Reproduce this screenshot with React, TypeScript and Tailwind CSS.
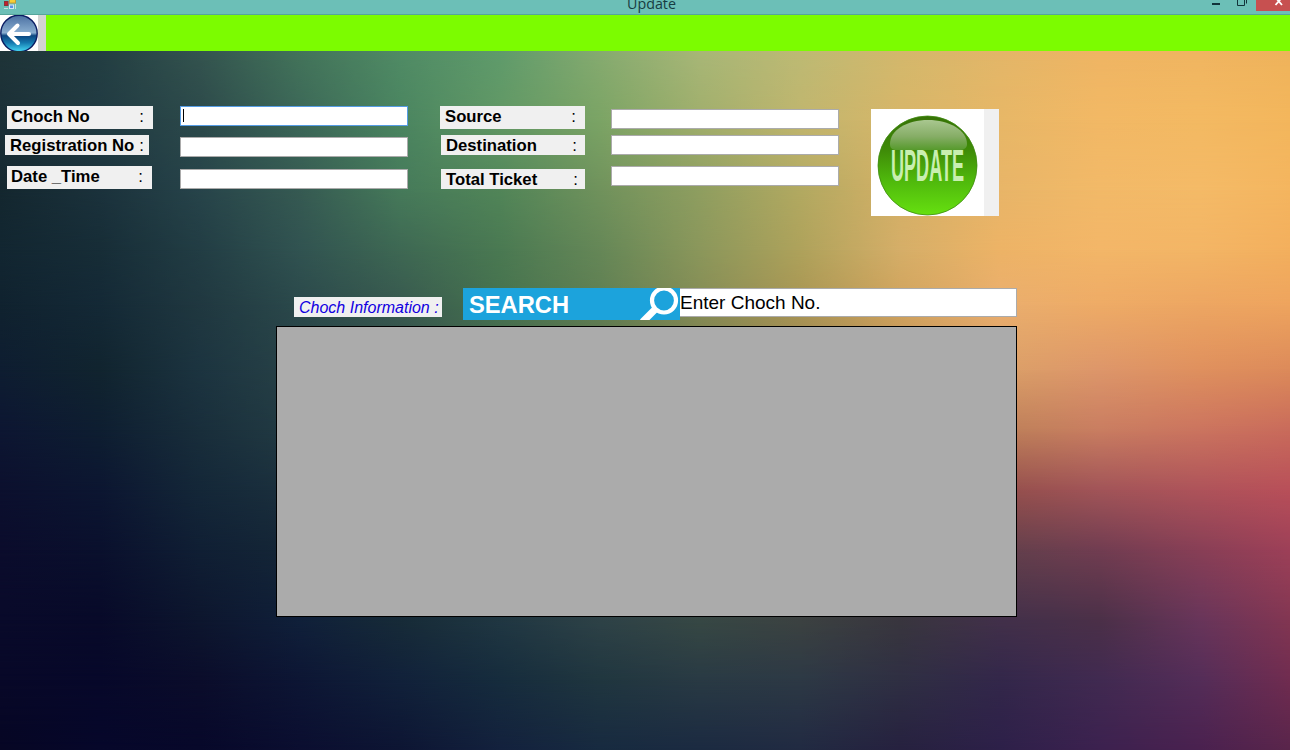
import React from "react";

const STOPS_X = [0, 100, 200, 300, 400, 500, 600, 700, 800, 900, 1000, 1100, 1200, 1290];

const ROWS: { y: number; colors: string[] }[] = [
  { y: 50, colors: ["#1f3438", "#233e42", "#34544f", "#43745a", "#508b65", "#5f9b6b", "#86ab70", "#a8b777", "#bdba74", "#d3b86c", "#e3b668", "#efb563", "#f0b560", "#efb35b"] },
  { y: 120, colors: ["#1b3038", "#213b43", "#2c494a", "#3c6758", "#4a8560", "#629865", "#7ba465", "#a0ae6c", "#c0b56e", "#d7b669", "#e7b767", "#f2b865", "#f3b962", "#f3b65c"] },
  { y: 190, colors: ["#14272f", "#1b323c", "#27444a", "#365a52", "#467a5a", "#518558", "#70925c", "#8f9e60", "#b2a961", "#d4b066", "#e8b568", "#f2b968", "#f4ba67", "#f4b55f"] },
  { y: 250, colors: ["#122631", "#172d37", "#223d44", "#315351", "#3e6853", "#4a7952", "#658757", "#8b975b", "#aea25b", "#d5ae68", "#edb366", "#f3b668", "#f3b565", "#f3af5d"] },
  { y: 305, colors: ["#10222f", "#142936", "#203840", "#2b494b", "#38594f", "#46724e", "#607f53", "#858c55", "#a99553", "#d0a35c", "#eaae6e", "#eeab66", "#eda662", "#eea45e"] },
  { y: 370, colors: ["#0e1d31", "#11242f", "#1c3440", "#284247", "#35504b", "#456451", "#5d704d", "#7c7c50", "#9c8555", "#c1925d", "#dba068", "#dd966a", "#df905e", "#dc8a5a"] },
  { y: 430, colors: ["#0d1632", "#0e1e31", "#192e3b", "#233c44", "#2d4649", "#3c574e", "#4f624d", "#6b6c50", "#867255", "#a4775a", "#bd8059", "#c97d61", "#cb745f", "#c96b5b"] },
  { y: 490, colors: ["#0c102e", "#0c1631", "#142738", "#1c313e", "#273e45", "#344c4b", "#43534a", "#5a5b4b", "#6f5c4c", "#83564e", "#944f4c", "#a15458", "#ae535a", "#b84f59"] },
  { y: 550, colors: ["#0b0c2c", "#0a102d", "#101f34", "#152737", "#1e333c", "#2a4045", "#374946", "#454a43", "#54494a", "#574147", "#62404b", "#713d51", "#883f56", "#9d4058"] },
  { y: 620, colors: ["#090a2a", "#080a29", "#0d162e", "#10203a", "#172b38", "#203742", "#2e4247", "#374844", "#3c4241", "#39363e", "#42304a", "#4b3048", "#68355a", "#823652"] },
  { y: 680, colors: ["#080828", "#07082a", "#0b0d2b", "#0d1634", "#11213a", "#162c3d", "#20363f", "#293a44", "#2d3945", "#2f2f43", "#33274a", "#412a51", "#542d58", "#702c50"] },
  { y: 750, colors: ["#060624", "#06072a", "#07082a", "#0b0e30", "#0d1533", "#13213d", "#172a40", "#1b2a41", "#212a42", "#26213f", "#2d2049", "#3c214f", "#4a214f", "#59254b"] },
];

function Backdrop() {
  return (
    <svg className="absolute inset-0 h-full w-full" viewBox="0 0 1290 750" preserveAspectRatio="none" aria-hidden="true">
      <defs>
        {ROWS.map((r, i) => (
          <React.Fragment key={r.y}>
            <linearGradient id={`row${i}`} gradientUnits="userSpaceOnUse" x1="0" x2="1290" y1="0" y2="0">
              {r.colors.map((c, j) => (
                <stop key={j} offset={STOPS_X[j] / 1290} stopColor={c} />
              ))}
            </linearGradient>
            {i > 0 && (
              <>
                <linearGradient id={`fade${i}`} gradientUnits="userSpaceOnUse" x1="0" x2="0" y1={ROWS[i - 1].y} y2={r.y}>
                  <stop offset="0" stopColor="#fff" stopOpacity="0" />
                  <stop offset="1" stopColor="#fff" stopOpacity="1" />
                </linearGradient>
                <mask id={`mask${i}`} maskUnits="userSpaceOnUse" x="0" y="0" width="1290" height="750">
                  <rect width="1290" height="750" fill={`url(#fade${i})`} />
                </mask>
              </>
            )}
          </React.Fragment>
        ))}
      </defs>
      {ROWS.map((r, i) => (
        <rect key={r.y} width="1290" height="750" fill={`url(#row${i})`} mask={i > 0 ? `url(#mask${i})` : undefined} />
      ))}
    </svg>
  );
}

function TitleBar() {
  return (
    <header className="relative flex h-[15px] items-start overflow-hidden border-b border-[#55a59b] bg-[#6cbfb7]">
      <svg className="ml-[3px] h-[11px] w-[15px]" viewBox="0 0 15 11">
        <rect x="1.5" y="1.5" width="3.500" height="4" fill="#c3202c" stroke="#8d3038" />
        <rect x="6.500" y="-2" width="6" height="5" fill="#f7cf35" stroke="#c49a35" />
        <rect x="6.500" y="5" width="4" height="3.500" fill="#5a91e6" stroke="#d5e4f5" />
        <path d="M5 8.500H1M12.500 4v5" stroke="#c8dedd" fill="none" />
      </svg>
      <span className="mt-[-6px] ml-[609px] text-[14.3px] leading-5 text-[#173c42]">Update</span>
      <svg className="ml-auto h-[11px] w-[80px]" viewBox="0 0 80 11">
        <rect x="2" y="3" width="8" height="2" fill="#12343a" />
        <path d="M27.500 -2v7.500h7V-2M36.500 -1v4.500" fill="none" stroke="#12343a" />
        <rect x="46" width="34" height="11" fill="#c75050" />
        <path d="M65.500 -2.500l6.500 7.500M72 -2.500L65.500 5" stroke="#fff" strokeWidth="1.8" />
      </svg>
    </header>
  );
}

function BackIcon() {
  return (
    <svg className="h-9 w-[38px] bg-white" viewBox="0 0 38 36">
      <defs>
        <linearGradient id="orbTop" x1="0" x2="0" y1="0" y2="1">
          <stop offset="0" stopColor="#4a70a2" />
          <stop offset="0.48" stopColor="#8aaed0" />
          <stop offset="0.56" stopColor="#0d4680" />
          <stop offset="0.75" stopColor="#1478ae" />
          <stop offset="1" stopColor="#48dcf6" />
        </linearGradient>
      </defs>
      <ellipse cx="19" cy="18.500" rx="18.200" ry="18.300" fill="url(#orbTop)" stroke="#0a1c62" strokeWidth="1.400" />
      <path d="M17.500 10.500L9 19l9 9M9.500 19H29" fill="none" stroke="#fff" strokeWidth="4" strokeLinecap="round" strokeLinejoin="round" />
    </svg>
  );
}

function Label({ text, box, colon }: { text: string; box: string; colon: string }) {
  return (
    <div className={`flex items-start justify-between bg-[#f0f0f0] text-[16.7px] leading-[22px] font-bold text-black ${box}`}>
      <span className="whitespace-pre">{text}</span>
      <span className={`font-normal ${colon}`}>:</span>
    </div>
  );
}

function Field({ box, focused = false }: { box: string; focused?: boolean }) {
  return (
    <div className={`h-5 w-[228px] border bg-white ${focused ? "border-[#569de5]" : "border-[#ababab]"} ${box}`}>
      {focused && <div className="mt-[2px] ml-[2px] h-[13px] w-px bg-black" />}
    </div>
  );
}

function UpdateButton() {
  return (
    <button className="mt-[3px] ml-8 flex h-[107px] w-32 bg-[#f0f0f0]">
      <svg className="h-[107px] w-[113px] bg-white" viewBox="0 0 113 107">
        <defs>
          <linearGradient id="ball" x1="0" x2="0" y1="0" y2="1">
            <stop offset="0" stopColor="#377206" />
            <stop offset="0.35" stopColor="#3f8c08" />
            <stop offset="0.65" stopColor="#4fb80c" />
            <stop offset="1" stopColor="#66e010" />
          </linearGradient>
          <linearGradient id="gloss" x1="0" x2="0" y1="0" y2="1">
            <stop offset="0" stopColor="#a9c790" />
            <stop offset="0.55" stopColor="#86ad66" />
            <stop offset="1" stopColor="#569a2c" />
          </linearGradient>
        </defs>
        <ellipse cx="56.500" cy="56.500" rx="49.500" ry="49.500" fill="url(#ball)" stroke="#3f8a10" strokeWidth="0.800" />
        <path d="M19 35C19 21 36 11 57 11s39 10 39 24c0 4-3 6-8 6H26c-5 0-7-2-7-6z" fill="url(#gloss)" />
        <text x="20" y="72" fontSize="44" fontWeight="bold" fontFamily="Liberation Sans, sans-serif" fill="#c9efb0" textLength="73" lengthAdjust="spacingAndGlyphs">
          UPDATE
        </text>
      </svg>
    </button>
  );
}

export default function App() {
  return (
    <div className="relative h-[750px] w-[1290px] overflow-hidden font-['Open_Sans',sans-serif]">
      <Backdrop />
      <div className="relative flex h-full flex-col">
        <TitleBar />
        <nav className="flex h-9 bg-[#7cfc00]">
          <BackIcon />
          <div className="w-2 bg-[#d3d3d3]" />
        </nav>

        <main className="font-['Liberation_Sans',Arial,sans-serif]">
          <section className="mt-[55px] flex h-[110px] items-start">
            <div className="flex w-[180px] flex-col items-start pl-[5px]">
              <Label text="Choch No" box="ml-[2px] h-[23px] w-[146px] pl-1" colon="mr-[9px]" />
              <Label text="Registration No" box="mt-[6px] h-5 w-36 pl-[5px]" colon="mr-[5px]" />
              <Label text="Date _Time" box="mt-[11px] ml-[2px] h-[23px] w-[145px] pl-1" colon="mr-[9px]" />
            </div>
            <div className="flex flex-col">
              <Field box="" focused />
              <Field box="mt-[11px]" />
              <Field box="mt-3" />
            </div>
            <div className="ml-8 flex w-[145px] flex-col items-end">
              <Label text="Source" box="h-[23px] w-[145px] pl-[5px]" colon="mr-[9px]" />
              <Label text="Destination" box="mt-[6px] h-5 w-36 pl-[5px]" colon="mr-2" />
              <Label text="Total Ticket" box="mt-[14px] h-5 w-36 pl-[5px]" colon="mr-[7px]" />
            </div>
            <div className="ml-[26px] flex flex-col pt-[3px]">
              <Field box="" />
              <Field box="mt-[6px]" />
              <Field box="mt-[11px]" />
            </div>
            <UpdateButton />
          </section>

          <section className="mt-[72px] ml-[276px] w-[741px]">
            <div className="flex h-[38px] items-start">
              <div className="mt-[9px] ml-[18px] h-5 w-[148px] bg-[#f0f0f0] pl-[5px] text-[16px] leading-[22px] whitespace-nowrap text-[#1200e0] italic">
                Choch Information :
              </div>
              <button className="ml-[21px] flex h-8 w-[217px] items-center justify-between bg-[#1ca3dc] pl-[6px]">
                <span className="text-[23.7px] leading-8 font-bold text-white">
                  <span className="block pt-px">SEARCH</span>
                </span>
                <svg className="h-8 w-10" viewBox="0 0 40 32">
                  <circle cx="24" cy="12.500" r="12" fill="none" stroke="#fff" strokeWidth="4.200" />
                  <path d="M16 20.500L2.500 34" stroke="#fff" strokeWidth="7" />
                </svg>
              </button>
              <div className="h-[29px] w-[337px] border border-l-0 border-[#ababab] bg-white text-[19px] leading-[27px] text-black">
                Enter Choch No.
              </div>
            </div>
            <div className="h-[291px] border border-black bg-[#ababab]" />
          </section>
        </main>
      </div>
    </div>
  );
}
